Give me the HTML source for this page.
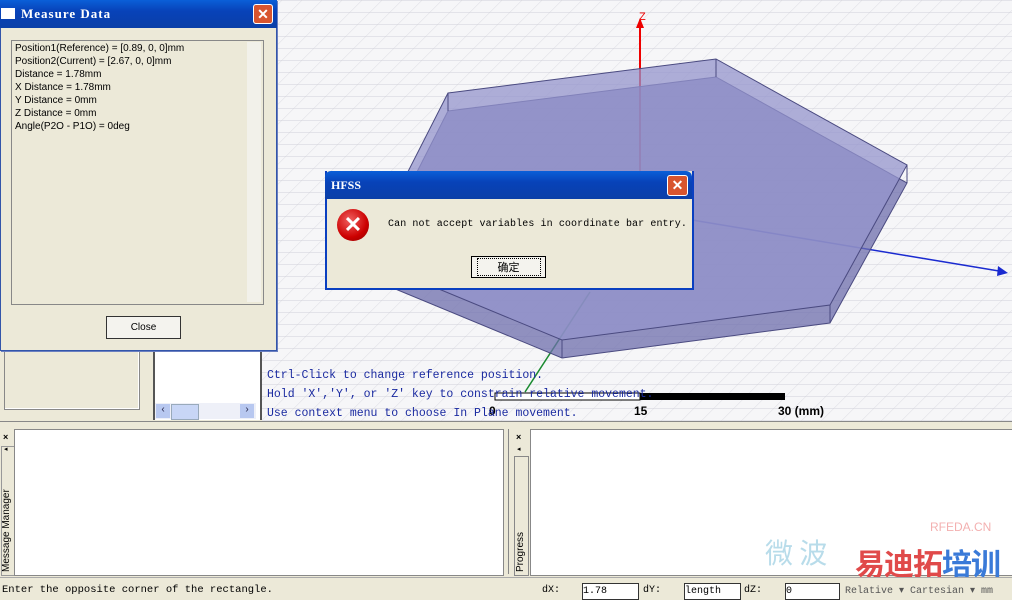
<!DOCTYPE html>
<html><head><meta charset="utf-8"><style>
body{margin:0;width:1012px;height:597px;position:relative;overflow:hidden;background:#ece9d8;font-family:"Liberation Sans","Noto Sans CJK SC",sans-serif}
.a{position:absolute}
.mono{font-family:"Liberation Mono","Noto Sans CJK SC",monospace}
.title{background:linear-gradient(#0a5fd8,#0842b8 40%,#0a3fa8);color:#fff;font-weight:bold;font-family:"Liberation Serif",serif}
.xbtn{background:#d8552f;border:1px solid #fff;border-radius:3px;color:#fff;text-align:center;font-weight:bold}
.vt{writing-mode:vertical-rl;transform:rotate(180deg)}
</style></head><body>
<!-- 3D view -->
<div class="a" style="left:262px;top:0;width:750px;height:422px;background:#f6f6f8;overflow:hidden">
<svg width="750" height="422" class="a" style="left:0;top:0">
<defs><pattern id="g" width="20" height="12" patternUnits="userSpaceOnUse" patternTransform="skewX(-45)"><path d="M0 0H20M0 0V12" stroke="#d4d4dc" stroke-width="1" fill="none"/></pattern></defs>
<rect width="750" height="422" fill="url(#g)"/>
<g transform="translate(-262,0)">
<line x1="640" y1="20" x2="640" y2="215" stroke="#e00" stroke-width="2"/>
<polygon points="636,28 644,28 640,18" fill="#e00"/>
<text x="639" y="20" font-size="11" fill="#e00" font-family="Liberation Sans">Z</text>
<line x1="680" y1="218" x2="1005" y2="272" stroke="#1a2ad0" stroke-width="1.5"/>
<polygon points="998,266 1008,273 997,276" fill="#1a2ad0"/>
<line x1="590" y1="292" x2="525" y2="392" stroke="#1a8a30" stroke-width="1.5"/>
<polygon points="448,111 716,77 907,183 830,323 562,358 364,276" fill="#6e6eac" fill-opacity="0.75" stroke="#4a4a80"/>
<polygon points="448,93 716,59 907,165 830,305 562,340 364,258" fill="#9494cc" fill-opacity="0.75" stroke="#4a4a80"/>
<line x1="448" y1="93" x2="448" y2="111" stroke="#4a4a80"/>
<line x1="716" y1="59" x2="716" y2="77" stroke="#4a4a80"/>
<line x1="907" y1="165" x2="907" y2="183" stroke="#4a4a80"/>
<line x1="830" y1="305" x2="830" y2="323" stroke="#4a4a80"/>
<line x1="562" y1="340" x2="562" y2="358" stroke="#4a4a80"/>
<line x1="495" y1="397" x2="785" y2="397" stroke="#000" stroke-width="1"/>
<rect x="495" y="393" width="145" height="7" fill="#fff" stroke="#000"/>
<rect x="640" y="393" width="145" height="7" fill="#000"/>
<text x="489" y="415" font-size="12" font-weight="bold" font-family="Liberation Sans">0</text>
<text x="634" y="415" font-size="12" font-weight="bold" font-family="Liberation Sans">15</text>
<text x="778" y="415" font-size="12" font-weight="bold" font-family="Liberation Sans">30 (mm)</text>
</g></svg>
<div class="a mono" style="left:5px;top:366px;font-size:11.5px;line-height:19px;color:#1a2aa0;white-space:pre">Ctrl-Click to change reference position.
Hold 'X','Y', or 'Z' key to constrain relative movement.
Use context menu to choose In Plane movement.</div>
</div>
<!-- left lower panels -->
<div class="a" style="left:4px;top:352px;width:134px;height:57px;border:1px solid #888;border-top:none;box-shadow:inset -1px -1px #fff"></div>
<div class="a" style="left:153px;top:352px;width:105px;height:68px;background:#fff;border-left:2px solid #555;border-right:2px solid #555"></div>
<div class="a" style="left:155px;top:403px;width:101px;height:16px;background:#eef0f8"></div>
<div class="a" style="left:156px;top:404px;width:14px;height:14px;background:#b8c8f0;color:#224;font-size:10px;text-align:center">‹</div>
<div class="a" style="left:171px;top:404px;width:26px;height:14px;background:#c8d6f6;border:1px solid #9ab"></div>
<div class="a" style="left:240px;top:404px;width:14px;height:14px;background:#b8c8f0;color:#224;font-size:10px;text-align:center">›</div>
<div class="a" style="left:0;top:421px;width:1012px;height:4px;background:#ece9d8;border-top:1px solid #888"></div>
<!-- bottom panels -->
<div class="a" style="left:1px;top:446px;width:12px;height:128px;border:1px solid #999"></div>
<div class="a" style="left:3px;top:432px;font-size:9px;font-weight:bold">×</div>
<div class="a" style="left:4px;top:445px;font-size:7px">◂</div>
<div class="a" style="left:14px;top:429px;width:488px;height:145px;background:#fff;border:1px solid #888"></div>
<div class="a vt" style="left:1px;top:488px;font-size:10px;height:84px;text-align:left">Message Manager</div>
<div class="a" style="left:504px;top:429px;width:4px;height:145px;border-right:1px solid #888"></div>
<div class="a" style="left:516px;top:432px;font-size:9px;font-weight:bold">×</div>
<div class="a" style="left:517px;top:445px;font-size:7px">◂</div>
<div class="a" style="left:514px;top:456px;width:13px;height:118px;border:1px solid #888"></div>
<div class="a vt" style="left:515px;top:520px;font-size:10px;height:52px">Progress</div>
<div class="a" style="left:530px;top:429px;width:482px;height:145px;background:#fff;border:1px solid #888"></div>
<!-- watermark -->
<div class="a" style="left:765px;top:532px;font-size:28px;color:#b8dcea;font-family:'Noto Sans CJK SC',sans-serif">微 波</div>
<div class="a" style="left:855px;top:540px;font-size:30px;font-weight:bold;color:#e04a4a;font-family:'Noto Sans CJK SC',sans-serif;letter-spacing:-1px">易迪拓<span style="color:#3a7ad8">培训</span></div>
<div class="a" style="left:930px;top:520px;font-size:12px;color:#f3b0b0">RFEDA.CN</div>
<!-- status -->
<div class="a" style="left:0;top:577px;width:1012px;height:20px;border-top:1px solid #aaa"></div>
<div class="a mono" style="left:2px;top:584px;font-size:10.5px">Enter the opposite corner of the rectangle.</div>
<div class="a mono" style="left:542px;top:585px;font-size:10px">dX:</div>
<div class="a mono" style="left:582px;top:583px;width:55px;height:15px;background:#fff;border:1px solid #333;font-size:10px;line-height:15px">1.78</div>
<div class="a mono" style="left:643px;top:585px;font-size:10px">dY:</div>
<div class="a mono" style="left:684px;top:583px;width:55px;height:15px;background:#fff;border:1px solid #333;font-size:10px;line-height:15px">length</div>
<div class="a mono" style="left:744px;top:585px;font-size:10px">dZ:</div>
<div class="a mono" style="left:785px;top:583px;width:53px;height:15px;background:#fff;border:1px solid #333;font-size:10px;line-height:15px">0</div>
<div class="a mono" style="left:845px;top:585px;font-size:10px;color:#555">Relative ▾ Cartesian ▾ mm</div>
<!-- Measure data dialog -->
<div class="a" style="left:0;top:0;width:275px;height:350px;background:#ece9d8;border:1px solid #3355aa;border-top:none;box-shadow:1px 1px 0 #6a7fc0"></div>
<div class="a title" style="left:0;top:0;width:277px;height:28px;font-size:13px;line-height:28px;letter-spacing:1px">
<span style="display:inline-block;width:14px;height:11px;background:#fff;margin:0 6px 0 1px;vertical-align:-1px"></span>Measure Data</div>
<div class="a xbtn" style="left:253px;top:4px;width:18px;height:18px;font-size:14px;line-height:18px">✕</div>
<div class="a" style="left:11px;top:40px;width:251px;height:263px;background:#ece9d8;border:1px solid #888"></div>
<div class="a" style="left:15px;top:42px;font-size:10px;line-height:13px;white-space:pre">Position1(Reference) = [0.89, 0, 0]mm
Position2(Current) = [2.67, 0, 0]mm
Distance = 1.78mm
X Distance = 1.78mm
Y Distance = 0mm
Z Distance = 0mm
Angle(P2O - P1O) = 0deg</div>
<div class="a" style="left:247px;top:42px;width:14px;height:260px;background:#f2f1ea"></div>
<div class="a" style="left:106px;top:316px;width:73px;height:21px;border:1px solid #333;background:#f4f3ee;font-size:10px;line-height:21px;text-align:center">Close</div>
<!-- HFSS dialog -->
<div class="a" style="left:325px;top:171px;width:365px;height:117px;background:#ece9d8;border:2px solid #0a3fc0;border-top:none"></div>
<div class="a title" style="left:325px;top:171px;width:367px;height:28px;font-size:12px;line-height:28px;border-radius:6px 6px 0 0"><span style="margin-left:6px">HFSS</span></div>
<div class="a xbtn" style="left:667px;top:175px;width:19px;height:19px;font-size:14px;line-height:19px">✕</div>
<div class="a" style="left:337px;top:209px;width:32px;height:32px;border-radius:50%;background:radial-gradient(circle at 40% 35%,#f06060,#c00 60%,#800);color:#fff;font-size:22px;line-height:32px;text-align:center;font-weight:bold">✕</div>
<div class="a mono" style="left:388px;top:219px;font-size:10px;letter-spacing:0.1px">Can not accept variables in coordinate bar entry.</div>
<div class="a" style="left:471px;top:256px;width:73px;height:20px;border:1px solid #000;background:#f4f3ee;font-size:11px;line-height:20px;text-align:center;font-family:'Noto Sans CJK SC',sans-serif"><span style="border:1px dotted #000;padding:0 20px">确定</span></div>
</body></html>
